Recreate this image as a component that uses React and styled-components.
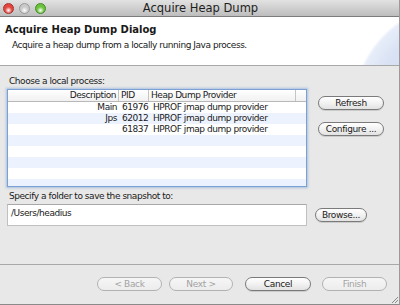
import React from 'react'
import styled, { createGlobalStyle } from 'styled-components'

const GlobalStyle = createGlobalStyle`
  html, body {
    margin: 0;
    padding: 0;
    background: #e8e8e8;
  }
  body {
    font-family: "DejaVu Sans", "Liberation Sans", sans-serif;
    color: #1a1a1a;
  }
`

const rows = [
  { description: 'Main', pid: '61976', provider: 'HPROF jmap dump provider' },
  { description: 'Jps', pid: '62012', provider: 'HPROF jmap dump provider' },
  { description: '', pid: '61837', provider: 'HPROF jmap dump provider' },
  {},
  {},
  {},
  {},
  {}
]

const App = () => {
  return (
    <Window>
      <GlobalStyle />
      <TitleBar>
        <Lights>
          <Light color="#e2463e" edge="#a8302a" />
          <Light color="#c9c9c9" edge="#9a9a9a" />
          <Light color="#6cc23c" edge="#3f8a22" />
        </Lights>
        <WindowTitle>Acquire Heap Dump</WindowTitle>
      </TitleBar>

      <Banner>
        <BannerTitle>Acquire Heap Dump Dialog</BannerTitle>
        <BannerText>Acquire a heap dump from a locally running Java process.</BannerText>
      </Banner>

      <Body>
        <Label>Choose a local process:</Label>
        <ProcessRow>
          <Table>
            <HeaderRow>
              <HeaderCell width="111px" align="right">Description</HeaderCell>
              <HeaderCell width="30px">PID</HeaderCell>
              <HeaderCell width="147px">Heap Dump Provider</HeaderCell>
              <HeaderCell width="11px" />
            </HeaderRow>
            {rows.map((row, i) => (
              <Row key={i} alt={i % 2 === 1}>
                <Cell width="111px" align="right">{row.description}</Cell>
                <Cell width="30px">{row.pid}</Cell>
                <Cell width="147px">{row.provider}</Cell>
              </Row>
            ))}
          </Table>
          <SideButtons>
            <Button width="66px">Refresh</Button>
            <Button width="66px">Configure ...</Button>
          </SideButtons>
        </ProcessRow>

        <FolderLabel>Specify a folder to save the snapshot to:</FolderLabel>
        <FolderRow>
          <TextField>/Users/headius</TextField>
          <Button width="52px">Browse...</Button>
        </FolderRow>
      </Body>

      <Footer>
        <Button width="65px" disabled>&lt; Back</Button>
        <Button width="64px" spaceBefore="7px" disabled>Next &gt;</Button>
        <Button width="66px" spaceBefore="12px">Cancel</Button>
        <Button width="65px" spaceBefore="11px" disabled>Finish</Button>
      </Footer>
      <Grip>
        <svg width="9" height="9" viewBox="0 0 9 9">
          <path d="M8 2 L2 8 M8 5 L5 8" stroke="#8a8a8a" strokeWidth="1" />
        </svg>
      </Grip>
    </Window>
  )
}

const Window = styled.div`
  position: relative;
  width: 400px;
  height: 305px;
  box-sizing: border-box;
  border-right: 1px solid #9a9a9a;
  border-bottom: 1px solid #8a8a8a;
  background: #e8e8e8;
  display: flex;
  flex-direction: column;
  overflow: hidden;
`

const TitleBar = styled.div`
  height: 16px;
  flex: none;
  position: relative;
  display: flex;
  align-items: center;
  justify-content: center;
  background: linear-gradient(to bottom, #e2e2e2, #bdbdbd);
  border-bottom: 1px solid #7c7c7c;
`

const Lights = styled.div`
  position: absolute;
  left: 3px;
  top: 3px;
  display: flex;
  gap: 5px;
`

const Light = styled.span`
  width: 11px;
  height: 11px;
  border-radius: 50%;
  box-sizing: border-box;
  border: 1px solid ${props => props.edge};
  background: radial-gradient(circle at 50% 70%, #ffffff 0%, ${props => props.color} 45%, ${props => props.color} 100%);
`

const WindowTitle = styled.div`
  font-size: 11.5px;
  color: #1e1e1e;
  margin-left: 2px;
`

const Banner = styled.div`
  height: 49px;
  flex: none;
  box-sizing: border-box;
  padding: 6px 6px 0 5px;
  background:
    radial-gradient(circle 108px at 460px 93px, #cdd8ef 0%, #d9e2f4 80%, #e7edf9 97%, rgba(255, 255, 255, 0) 100%),
    #ffffff;
  border-bottom: 1px solid #a8a8a8;
`

const BannerTitle = styled.div`
  font-weight: bold;
  font-size: 10px;
  line-height: 13px;
`

const BannerText = styled.div`
  font-size: 9px;
  letter-spacing: -0.45px;
  line-height: 12px;
  margin: 3px 0 0 7px;
`

const Body = styled.div`
  padding: 10px 0 0 7px;
  flex: none;
`

const Label = styled.div`
  font-size: 9px;
  letter-spacing: -0.45px;
  line-height: 11px;
  margin: 0 0 2px 2px;
`

const ProcessRow = styled.div`
  display: flex;
  align-items: flex-start;
`

const Table = styled.div`
  width: 300px;
  height: 98px;
  box-sizing: border-box;
  border: 1px solid #7aa0d4;
  box-shadow: 0 0 2px 1px rgba(120, 160, 215, 0.55);
  background: #ffffff;
  overflow: hidden;
`

const HeaderRow = styled.div`
  display: flex;
  height: 11px;
  border-bottom: 1px solid #b8b8b8;
  background: linear-gradient(to bottom, #ffffff, #f1f1f1);
`

const HeaderCell = styled.div`
  width: ${props => props.width};
  flex: none;
  font-size: 9px;
  letter-spacing: -0.45px;
  line-height: 11px;
  padding: 0 2px;
  text-align: ${props => props.align || 'left'};
  border-right: 1px solid #c4c4c4;
  box-sizing: border-box;
  white-space: nowrap;
`

const Row = styled.div`
  display: flex;
  height: 11px;
  background: ${props => (props.alt ? '#edf3fe' : '#ffffff')};
`

const Cell = styled.div`
  width: ${props => props.width};
  flex: none;
  font-size: 9px;
  letter-spacing: -0.45px;
  line-height: 11px;
  padding: 0 2px;
  text-align: ${props => props.align || 'left'};
  box-sizing: border-box;
  white-space: nowrap;
  margin-right: 1px;
`

const SideButtons = styled.div`
  display: flex;
  flex-direction: column;
  gap: 12px;
  margin: 7px 0 0 11px;
`

const Button = styled.button`
  width: ${props => props.width};
  height: 14px;
  margin-left: ${props => props.spaceBefore || '0'};
  padding: 0;
  box-sizing: border-box;
  border-radius: 7px;
  border: 1px solid ${props => (props.disabled ? '#b2b2b2' : '#7a7a7a')};
  background: ${props =>
    props.disabled
      ? 'linear-gradient(to bottom, #f6f6f6, #ececec)'
      : 'linear-gradient(to bottom, #ffffff 0%, #f2f2f2 50%, #e2e2e2 100%)'};
  box-shadow: ${props => (props.disabled ? 'none' : '0 1px 0 rgba(0, 0, 0, 0.12)')};
  font-family: "DejaVu Sans", "Liberation Sans", sans-serif;
  font-size: 9px;
  letter-spacing: -0.35px;
  line-height: 12px;
  color: ${props => (props.disabled ? '#a2a2a2' : '#1a1a1a')};
  text-align: center;
  white-space: nowrap;
`

const FolderLabel = styled.div`
  font-size: 9px;
  letter-spacing: -0.45px;
  line-height: 11px;
  margin: 4px 0 2px 2px;
`

const FolderRow = styled.div`
  display: flex;
  align-items: center;
  gap: 8px;
`

const TextField = styled.div`
  width: 300px;
  height: 22px;
  box-sizing: border-box;
  border: 1px solid #c0c0c0;
  border-top-color: #a8a8a8;
  background: #ffffff;
  font-size: 9px;
  letter-spacing: -0.45px;
  line-height: 11px;
  padding: 3px 3px;
`

const Footer = styled.div`
  margin-top: auto;
  height: 40px;
  flex: none;
  box-sizing: border-box;
  border-top: 1px solid #a8a8a8;
  display: flex;
  align-items: flex-start;
  padding: 12px 0 0 97px;
`

const Grip = styled.div`
  position: absolute;
  right: 0;
  bottom: 0;
  width: 9px;
  height: 9px;
  display: flex;
`

export default App
